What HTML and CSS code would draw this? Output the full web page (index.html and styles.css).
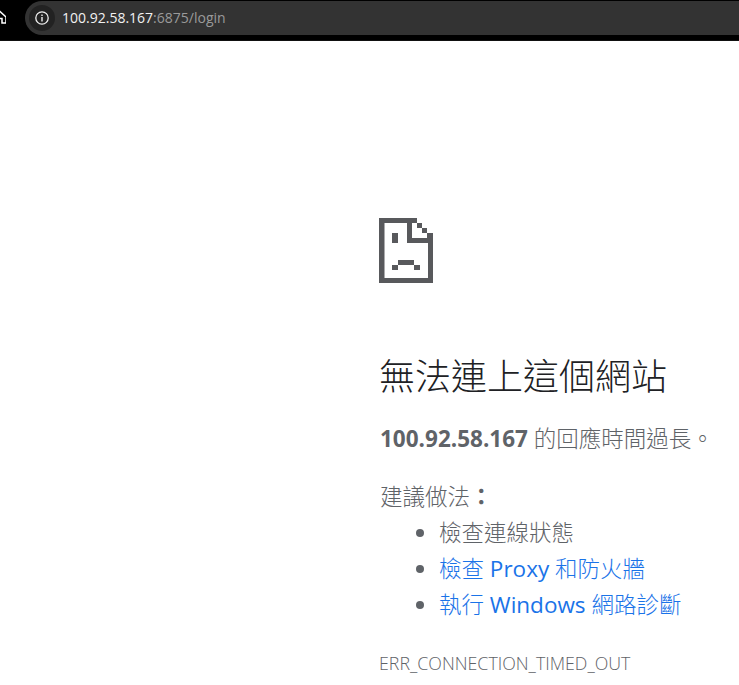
FILE: index.html
```html
<!DOCTYPE html>
<html lang="zh-Hant">
<head>
<meta charset="utf-8">
<title>100.92.58.167</title>
<link rel="stylesheet" href="styles.css">
</head>
<body>
<header class="toolbar">
  <svg class="home" width="6" height="14" viewBox="0 0 6 14"><path d="M-6 7L0 1.500L6 7V13H2V8.500H-2V13" fill="none" stroke="#fff" stroke-width="1.500"/></svg>
  <div class="omnibox">
    <span class="info"><svg width="16" height="16" viewBox="0 0 16 16"><circle cx="8" cy="8" r="6.200" fill="none" stroke="#eee" stroke-width="1.300"/><path d="M8 7V11.500M8 4.400V6" stroke="#eee" stroke-width="1.400"/></svg></span>
    <span class="url">100.92.58.167<span class="dim">:6875/login</span></span>
  </div>
</header>
<main class="content">
  <svg class="sad" width="54" height="65" viewBox="0 0 54 65"><path fill="#58595c" d="M0 0H38V5H5.500V60H49V25H28V5H33V20H54V65H0ZM38 5H43V10H38ZM43 10H48V15H43ZM48 15H54V20H48ZM13 15H19V25H13ZM19 42H35V47H19ZM13 47H19V52H13ZM35 47H41V52H35Z"/></svg>
  <h1 class="title">無法連上這個網站</h1>
  <p class="summary"><strong>100.92.58.167</strong> 的回應時間過長。</p>
  <p class="suggest">建議做法<b class="colon">：</b></p>
  <ul class="list">
    <li>檢查連線狀態</li>
    <li><a href="#">檢查 <span class="latin">Proxy</span> 和防火牆</a></li>
    <li><a href="#">執行 <span class="latin">Windows</span> 網路診斷</a></li>
  </ul>
  <div class="code">ERR_CONNECTION_TIMED_OUT</div>
</main>
</body>
</html>
```
FILE: styles.css
```css
html, body { margin: 0; padding: 0; background: #fff; height: 685px; overflow: hidden; }
body { font-family: "Open Sans", "Noto Sans CJK TC", sans-serif; font-size: 22.500px; color: #5f6368; }
.toolbar { height: 41px; background: #000; display: flex; align-items: flex-start; box-sizing: border-box; border-bottom: 1px solid #111; }
.home { margin-top: 10px; flex: none; }
.omnibox { flex: 1; height: 34px; margin: 1px 0 0 19px; background: #333; border-radius: 17px 0 0 17px; display: flex; align-items: center; }
.info { width: 26px; height: 26px; margin-left: 4px; border-radius: 50%; background: #222; display: flex; align-items: center; justify-content: center; }
.url { margin: -2px 0 0 7px; font: 14px "Open Sans", sans-serif; color: #f1f1f1; }
.dim { color: #9a9a9a; }
.content { margin-left: 379px; padding-top: 177px; }
.sad { display: block; }
.title { margin: 71px 0 0 0; font-size: 36px; line-height: 45px; font-weight: 300; color: #202124; }
.summary { margin: 22px 0 0 1px; line-height: 36px; font-weight: 300; }
.summary strong { font-weight: 700; }
.suggest { margin: 22px 0 0 1px; line-height: 36px; font-weight: 300; }
.colon { font-weight: 700; }
.list { margin: 0; padding: 0 0 0 60px; font-weight: 300; line-height: 36px; }
.list a { color: #1a73e8; text-decoration: none; }
.latin { font-weight: 400; }
.code { margin: 28px 0 0 0; font-size: 17.800px; line-height: 24px; font-weight: 300; }
```
